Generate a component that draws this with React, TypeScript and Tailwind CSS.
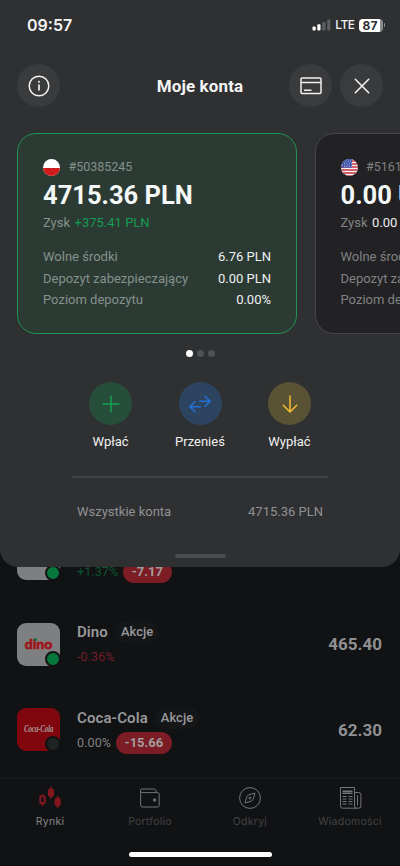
import type { ReactNode } from 'react';

type Account = {
  id: string;
  country: 'pl' | 'us';
  balance: string;
  profit: string;
  positive?: boolean;
  free: string;
  margin: string;
  level: string;
  active?: boolean;
};

const accounts: Account[] = [
  {
    id: '#50385245',
    country: 'pl',
    balance: '4715.36 PLN',
    profit: '+375.41 PLN',
    positive: true,
    free: '6.76 PLN',
    margin: '0.00 PLN',
    level: '0.00%',
    active: true,
  },
  {
    id: '#51612038',
    country: 'us',
    balance: '0.00 USD',
    profit: '0.00 USD',
    free: '0.00 USD',
    margin: '0.00 USD',
    level: '0.00%',
  },
];

function StatusBar() {
  return (
    <div className="flex h-[50px] items-center justify-between pl-[27px] pr-[15px]">
      <span className="font-['Inter'] text-[16px] font-semibold leading-5 text-[#f4f4f5]">09:57</span>
      <div className="flex items-center">
        <svg width="19" height="12" viewBox="0 0 19 12">
          <rect x="0.5" y="7.5" width="3.2" height="4" rx="1" fill="#fff" />
          <rect x="5.3" y="5.3" width="3.2" height="6.2" rx="1" fill="#fff" />
          <rect x="10.3" y="3" width="3.2" height="8.5" rx="1" fill="#5d5e60" />
          <rect x="15.2" y="0.5" width="3.2" height="11" rx="1" fill="#5d5e60" />
        </svg>
        <span className="ml-[4px] font-['Inter'] text-[12px] font-medium leading-4 tracking-[-0.5px] text-[#f0f0f0]">
          LTE
        </span>
        <div className="ml-[4px] h-[13px] w-[24px] rounded-[4px] bg-[linear-gradient(to_right,#fff_87%,#8b8c8d_87%)] pr-[1px] text-center font-['Inter'] text-[12px] font-bold leading-[13px] text-[#2f3032]">
          87
        </div>
        <div className="ml-[1px] h-[4px] w-[1.5px] rounded-r-full bg-[#8b8c8d]" />
      </div>
    </div>
  );
}

function RoundButton({ children }: { children: ReactNode }) {
  return (
    <button type="button" className="flex size-[43px] items-center justify-center rounded-full bg-[#3a3b3d]">
      {children}
    </button>
  );
}

function Header() {
  return (
    <div className="flex h-[43px] items-center justify-between px-[17px]">
      <div className="flex w-[94px]">
        <RoundButton>
          <svg width="22" height="22" viewBox="0 0 22 22" fill="none" stroke="#f0f0f0" strokeWidth="1.5">
            <circle cx="11" cy="11" r="9.8" />
            <path d="M11 9.6v6" strokeWidth="1.7" />
            <circle cx="11" cy="6.7" r="1" fill="#f0f0f0" stroke="none" />
          </svg>
        </RoundButton>
      </div>
      <h1 className="text-[17px] font-bold leading-5 tracking-[0.1px] text-[#f4f4f5]">Moje konta</h1>
      <div className="flex w-[94px] gap-2">
        <RoundButton>
          <svg width="22" height="18" viewBox="0 0 22 18" fill="none" stroke="#f0f0f0" strokeWidth="1.5">
            <rect x="1" y="1" width="20" height="15.6" rx="1" />
            <path d="M1 5.4h20M4 13.2h7.5" />
          </svg>
        </RoundButton>
        <RoundButton>
          <svg width="16" height="16" viewBox="0 0 16 16" fill="none" stroke="#f0f0f0" strokeWidth="1.6" strokeLinecap="round">
            <path d="M1.3 1.3l13.4 13.4M14.7 1.3L1.3 14.7" />
          </svg>
        </RoundButton>
      </div>
    </div>
  );
}

function Flag({ country }: { country: 'pl' | 'us' }) {
  if (country === 'pl') {
    return (
      <div className="size-[17px] overflow-hidden rounded-full bg-white">
        <div className="mt-[9px] h-[8px] bg-[#d01c1c]" />
      </div>
    );
  }

  return (
    <svg className="rounded-full" width="17" height="17" viewBox="0 0 17 17">
      <rect width="17" height="17" fill="#f3f0f1" />
      <path d="M0 2h17M0 5h17M0 8h17M0 11h17M0 14h17M0 17h17" stroke="#c8303c" strokeWidth="1.4" />
      <rect width="11" height="8.7" fill="#3a4fa8" />
      <path d="M2 2h9M3 4h8M1 6h10M3 7.7h8" stroke="#d5dbf2" strokeWidth="0.9" strokeDasharray="0.9 1.5" />
    </svg>
  );
}

function AccountCard({ account }: { account: Account }) {
  const label = account.active ? 'text-[#84918b]' : 'text-[#808182]';
  const rows = [
    ['Wolne środki', account.free],
    ['Depozyt zabezpieczający', account.margin],
    ['Poziom depozytu', account.level],
  ];

  return (
    <div
      className={`h-[201px] w-[280px] shrink-0 rounded-[19px] border px-[25px] pt-[23px] ${
        account.active ? 'border-[#229451] bg-[#2c3a34]' : 'border-[#454648] bg-[#222224]'
      }`}
    >
      <div className="flex h-[20px] items-center gap-[8.5px]">
        <Flag country={account.country} />
        <span className={`text-[12.5px] leading-5 ${label}`}>{account.id}</span>
      </div>
      <div className="mt-[3px] whitespace-nowrap text-[25.5px] font-bold leading-[30px] text-[#f4f8f6]">{account.balance}</div>
      <div className="mt-[3px] flex gap-[4.5px] whitespace-nowrap text-[13px] leading-5">
        <span className={label}>Zysk</span>
        <span className={account.positive ? 'text-[#169c52]' : 'text-[#eeeeef]'}>{account.profit}</span>
      </div>
      <div className="mt-[13px] flex flex-col text-[13px] leading-[21.7px]">
        {rows.map(([name, value]) => (
          <div key={name} className="flex justify-between whitespace-nowrap">
            <span className={label}>{name}</span>
            <span className="text-[#eef1f0]">{value}</span>
          </div>
        ))}
      </div>
    </div>
  );
}

function Action({ label, color, children }: { label: string; color: string; children: ReactNode }) {
  return (
    <div className="flex w-[89.5px] flex-col items-center">
      <div className={`flex size-[43px] items-center justify-center rounded-full ${color}`}>{children}</div>
      <span className="mt-[7px] text-[13px] leading-5 text-[#f0f0f0]">{label}</span>
    </div>
  );
}

function AccountsSheet() {
  return (
    <div className="relative z-10 flex h-[567px] shrink-0 flex-col rounded-b-[18px] bg-[#2f3032]">
      <StatusBar />
      <div className="mt-[14px]">
        <Header />
      </div>
      <div className="mt-[26px] flex shrink-0 gap-[17.5px] overflow-hidden pl-[17px]">
        {accounts.map((account) => (
          <AccountCard key={account.id} account={account} />
        ))}
      </div>
      <div className="mt-[16px] flex justify-center gap-[4px]">
        <span className="size-[7px] rounded-full bg-white" />
        <span className="size-[7px] rounded-full bg-[#505153]" />
        <span className="size-[7px] rounded-full bg-[#505153]" />
      </div>
      <div className="mt-[25px] flex justify-center">
        <Action label="Wpłać" color="bg-[#274e3b]">
          <svg width="18" height="18" viewBox="0 0 18 18" fill="none" stroke="#12a653" strokeWidth="1.4" strokeLinecap="round">
            <path d="M9 1v16M1 9h16" />
          </svg>
        </Action>
        <Action label="Przenieś" color="bg-[#2d4460]">
          <svg width="22" height="18" viewBox="0 0 22 18" fill="none" stroke="#2173d2" strokeWidth="1.5" strokeLinecap="round" strokeLinejoin="round">
            <path d="M10.7 6.3H21M16 1.3l5.2 5-5.2 5M11.3 11.7H1M6 6.7l-5.2 5L6 16.7" />
          </svg>
        </Action>
        <Action label="Wypłać" color="bg-[#5a5234]">
          <svg width="16" height="18" viewBox="0 0 16 18" fill="none" stroke="#f5bd32" strokeWidth="1.5" strokeLinecap="round" strokeLinejoin="round">
            <path d="M8 1v16M1.3 10.2L8 17l6.7-6.8" />
          </svg>
        </Action>
      </div>
      <div className="mx-[72px] mt-[24px] h-[2px] shrink-0 bg-[#404143]" />
      <div className="mx-[77px] mt-[24px] flex justify-between text-[13px] leading-5 text-[#909192]">
        <span>Wszystkie konta</span>
        <span>4715.36 PLN</span>
      </div>
      <div className="mx-auto mt-[32px] h-[4px] w-[51px] rounded-full bg-[#4b4c4e]" />
    </div>
  );
}

function InstrumentIcon({ bg, dot, children }: { bg: string; dot: string; children?: ReactNode }) {
  return (
    <div className={`relative flex size-[43px] shrink-0 items-center justify-center rounded-[9px] ${bg}`}>
      {children}
      <span className={`absolute -bottom-[1px] -right-[1px] size-[16px] rounded-full border-2 border-[#111214] ${dot}`} />
    </div>
  );
}

type InstrumentProps = {
  name: string;
  change: string;
  changeColor: string;
  result?: string;
  price?: string;
  icon: ReactNode;
};

function Instrument({ name, change, changeColor, result, price, icon }: InstrumentProps) {
  return (
    <div className="flex h-[85.5px] shrink-0 items-center pl-[17px] pr-[18px]">
      {icon}
      <div className="ml-[17px] flex flex-col pt-[1px]">
        <div className="flex h-[22px] items-center gap-[7px]">
          <span className="text-[15px] font-semibold leading-[22px] tracking-[0.1px] text-[#97989a]">{name}</span>
          <span className="rounded-full bg-[#151618] px-[6px] text-[13px] font-medium leading-[22px] text-[#97989a]">Akcje</span>
        </div>
        <div className="mt-[3px] flex h-[22px] items-center gap-[5px]">
          <span className={`text-[12.5px] leading-[22px] tracking-[0.1px] ${changeColor}`}>{change}</span>
          {result && (
            <span className="rounded-full bg-[#7c1d25] px-[8.5px] text-[13px] font-bold leading-[21.5px] text-[#a39c9d]">{result}</span>
          )}
        </div>
      </div>
      <span className="ml-auto text-[17px] font-bold leading-5 text-[#8f9091]">{price}</span>
    </div>
  );
}

function Tab({ label, active, children }: { label: string; active?: boolean; children: ReactNode }) {
  return (
    <div className="flex w-[100px] flex-col items-center">
      <div className="flex h-[24px] items-center">{children}</div>
      <span
        className={`mt-[4px] font-['Inter'] text-[10.5px] leading-4 tracking-[0.25px] ${
          active ? 'text-[#858687]' : 'text-[#424345]'
        }`}
      >
        {label}
      </span>
    </div>
  );
}

function TabBar() {
  return (
    <div className="flex h-[72px] shrink-0 border-t border-[#1b1c1e] pt-[7px]">
      <Tab label="Rynki" active>
        <svg width="24" height="24" viewBox="0 0 24 24" fill="#83171e" stroke="#83171e" strokeWidth="1.6">
          <path d="M4.5 8.2V20M13 0.8v12M19.7 10v12" />
          <rect x="2.3" y="10.2" width="4.4" height="7" rx="1" fill="#111214" strokeWidth="2" />
          <rect x="10.7" y="3.5" width="4.6" height="6.5" rx="1" />
          <rect x="17.4" y="12.8" width="4.6" height="6.5" rx="1" />
        </svg>
      </Tab>
      <Tab label="Portfolio">
        <svg width="22" height="22" viewBox="0 0 22 22" fill="none" stroke="#737476" strokeWidth="1">
          <path d="M1.6 4.2V18a2 2 0 0 0 2 2h15a1.6 1.6 0 0 0 1.6-1.6V7.2a1.6 1.6 0 0 0-1.6-1.6H3.2a1.6 1.6 0 0 1 0-3.6h12.2A1.6 1.6 0 0 1 17 3.6v2" />
          <circle cx="15.6" cy="13" r="1.1" strokeWidth="1.3" />
        </svg>
      </Tab>
      <Tab label="Odkryj">
        <svg width="24" height="24" viewBox="0 0 24 24" fill="none" stroke="#737476" strokeWidth="1">
          <circle cx="12" cy="12" r="10.4" />
          <path d="M17 7l-1.8 6.2a3 3 0 0 1-2 2L7 17l1.8-6.2a3 3 0 0 1 2-2z" strokeLinejoin="round" />
          <circle cx="12" cy="12" r="1" />
        </svg>
      </Tab>
      <Tab label="Wiadomości">
        <svg width="24" height="24" viewBox="0 0 24 24" fill="none" stroke="#737476" strokeWidth="1">
          <path d="M16.5 6.5v-5h-14V20a2.2 2.2 0 0 0 2.2 2.2h16a2.2 2.2 0 0 0 2.2-2.2V8.7a2.2 2.2 0 0 0-2.2-2.2h-4.2V20a2.2 2.2 0 0 0 2.2 2.2" />
          <path d="M4.5 5.2h10M4.5 7.2h10" strokeWidth="1.6" />
          <path d="M4.5 10.5h4M4.5 13h4M4.5 15.5h4M4.5 18h4M10.5 10.5h4M10.5 13h4M10.5 15.5h4M10.5 18h4M19.5 9.5v10" />
        </svg>
      </Tab>
    </div>
  );
}

export default function App() {
  return (
    <div className="flex h-[866px] w-[400px] flex-col overflow-hidden bg-[#111214] font-['Roboto',sans-serif]">
      <AccountsSheet />
      <div className="-mt-[51px] flex h-[262px] shrink-0 flex-col">
        <Instrument
          name="Allegro"
          change="+1.37%"
          changeColor="text-[#0b5430]"
          result="-7.17"
          icon={<InstrumentIcon bg="bg-[#7e7f80]" dot="bg-[#06783a]" />}
        />
        <Instrument
          name="Dino"
          change="-0.36%"
          changeColor="text-[#731d2a]"
          price="465.40"
          icon={
            <InstrumentIcon bg="bg-[#7e7f80]" dot="bg-[#06783a]">
              <span className="relative font-['Lato'] text-[14px] font-black leading-none text-[#a01218] [-webkit-text-stroke:0.5px_#a01218]">
                dino
                <span className="absolute left-[9px] top-[1px] size-[3px] rounded-full bg-[#06783a]" />
              </span>
            </InstrumentIcon>
          }
        />
        <Instrument
          name="Coca-Cola"
          change="0.00%"
          changeColor="text-[#818283]"
          result="-15.66"
          price="62.30"
          icon={
            <InstrumentIcon bg="bg-[#81070f]" dot="bg-[#202323]">
              <span className="scale-x-[0.75] whitespace-nowrap font-['Liberation_Serif'] text-[9.5px] font-bold italic leading-none tracking-[-0.3px] text-[#a59798]">
                Coca‑Cola
              </span>
            </InstrumentIcon>
          }
        />
      </div>
      <TabBar />
      <div className="mx-auto mt-[2px] h-[5px] w-[143px] shrink-0 rounded-full bg-white" />
    </div>
  );
}
